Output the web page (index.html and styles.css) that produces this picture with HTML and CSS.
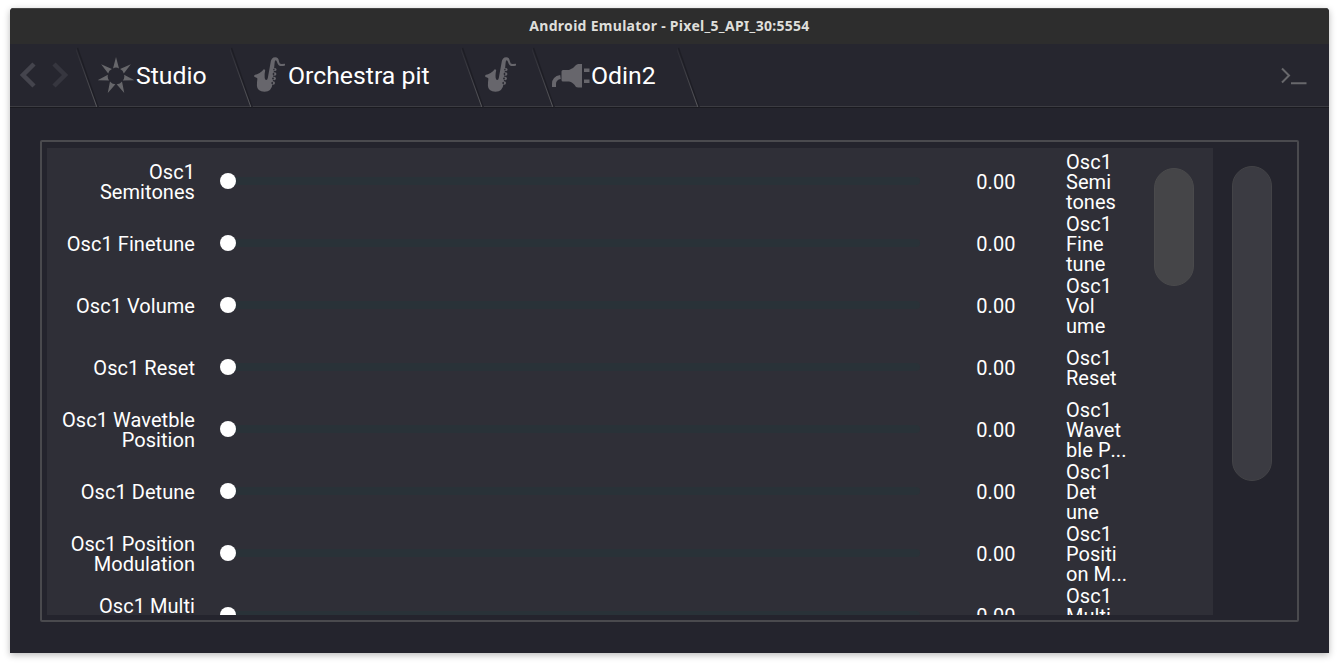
FILE: index.html
```
<!DOCTYPE html>
<html lang="en">
<head>
<meta charset="utf-8">
<title>Android Emulator - Pixel_5_API_30:5554</title>
<link rel="stylesheet" href="styles.css">
</head>
<body>
<svg width="0" height="0" class="defs">
  <symbol id="slash" viewBox="0 0 23 64">
    <path d="M1.500 4L22.500 64" stroke="#1e1e25" stroke-width="1.300"/>
    <path d="M-.5 4L20.800 63" stroke="url(#fade)" stroke-width="1"/>
  </symbol>
  <linearGradient id="fade" x1="0" y1="0" x2="0" y2="1">
    <stop offset="0" stop-color="#2c2c34"/><stop offset="1" stop-color="#58585c"/>
  </linearGradient>
  <symbol id="sax" viewBox="0 0 32 36">
    <path fill="#67666c" d="M.3 18C4 17.500 7.500 15 10 12L11.200 13.200Q10.200 17.500 10.700 21Q11 23 12.200 23Q13.500 22.800 13.800 21L16.500 6Q17 .3 21.300.3Q24.500.3 25 4.500Q25.300 7 27.500 7L31 6.800V8.600Q27 9.700 25 8.400Q23.600 7.400 23 5Q22.600 3.300 21.500 3.300Q20.800 3.400 20.600 6L18.700 26Q17.800 34.800 10.500 34.800Q3 34.500 2.900 28.500Q2.900 25 3.400 21.500Q2.500 20 .3 20Z"/>
    <g fill="#67666c"><circle cx="21" cy="12.500" r="1.500"/><circle cx="20.700" cy="17" r="1.700"/><circle cx="20.200" cy="21.500" r="1.700"/><circle cx="19.300" cy="26" r="1.700"/></g>
    <g fill="#26262f"><circle cx="19.900" cy="12.500" r=".7"/><circle cx="19.500" cy="17" r=".9"/><circle cx="19" cy="21.500" r=".9"/><circle cx="18.200" cy="26" r=".9"/></g>
  </symbol>
</svg>
<div class="window">
  <header class="titlebar">Android Emulator - Pixel_5_API_30:5554</header>
  <nav class="nav">
    <div class="arrows">
      <svg width="16" height="26" viewBox="0 0 16 26"><path d="M14 2L3 13L14 24" stroke="#44444d" stroke-width="4.500"/></svg>
      <svg width="16" height="26" viewBox="0 0 16 26"><path d="M2 2L13 13L2 24" stroke="#36363f" stroke-width="4.500"/></svg>
    </div>
    <svg class="slash"><use href="#slash"/></svg>
    <div class="tab studio">
      <svg width="36" height="38" viewBox="-18 -19 36 38"><g fill="#67676b"><path id="ray" d="M0-19L3-7.600Q0-9.200-3-7.600Z"/><use href="#ray" transform="rotate(51.400)"/><use href="#ray" transform="rotate(102.800)"/><use href="#ray" transform="rotate(154.200)"/><use href="#ray" transform="rotate(205.700)"/><use href="#ray" transform="rotate(257.100)"/><use href="#ray" transform="rotate(308.500)"/></g></svg>
      <span>Studio</span>
    </div>
    <svg class="slash"><use href="#slash"/></svg>
    <div class="tab orchestra">
      <svg width="32" height="36"><use href="#sax"/></svg>
      <span>Orchestra pit</span>
    </div>
    <svg class="slash"><use href="#slash"/></svg>
    <div class="tab instrument"><svg width="32" height="36"><use href="#sax"/></svg></div>
    <svg class="slash"><use href="#slash"/></svg>
    <div class="tab odin">
      <svg width="38" height="24" viewBox="0 0 38 24"><path d="M2 23V20Q2 14 8.500 13" fill="none" stroke="#67666c" stroke-width="4"/><path fill="#67666c" d="M11 6H17Q21 5 24 1L26 0H30V23.500H26L24 23Q21 18 17 17.500H11Q9.500 17.500 9.500 16V7.500Q9.500 6 11 6ZM32 4.500H37.500V8H32ZM32 15.500H37.500V19H32Z"/></svg>
      <span>Odin2</span>
    </div>
    <svg class="slash"><use href="#slash"/></svg>
    <svg class="console" width="26" height="18" viewBox="0 0 26 18"><path d="M1 1.500L8 8.500L1 15.500" stroke="#68686c" stroke-width="2"/><path d="M10 16.200H25.500" stroke="#68686c" stroke-width="2"/></svg>
  </nav>
  <main class="content">
    <section class="panel">
      <div class="list">
        <div class="rows">
          <div class="row"><div class="label">Osc1<br>Semitones</div><div class="slider"><i></i></div><div class="value">0.00</div><div class="name">Osc1<br>Semi<br>tones</div></div>
          <div class="row"><div class="label">Osc1 Finetune</div><div class="slider"><i></i></div><div class="value">0.00</div><div class="name">Osc1<br>Fine<br>tune</div></div>
          <div class="row"><div class="label">Osc1 Volume</div><div class="slider"><i></i></div><div class="value">0.00</div><div class="name">Osc1<br>Vol<br>ume</div></div>
          <div class="row"><div class="label">Osc1 Reset</div><div class="slider"><i></i></div><div class="value">0.00</div><div class="name">Osc1<br>Reset</div></div>
          <div class="row"><div class="label">Osc1 Wavetble<br>Position</div><div class="slider"><i></i></div><div class="value">0.00</div><div class="name">Osc1<br>Wavet<br>ble <span class="unkerned">P...</span></div></div>
          <div class="row"><div class="label">Osc1 Detune</div><div class="slider"><i></i></div><div class="value">0.00</div><div class="name">Osc1<br>Det<br>une</div></div>
          <div class="row"><div class="label">Osc1 Position<br>Modulation</div><div class="slider"><i></i></div><div class="value">0.00</div><div class="name">Osc1<br>Positi<br>on M...</div></div>
          <div class="row"><div class="label">Osc1 Multi</div><div class="slider"><i></i></div><div class="value">0.00</div><div class="name">Osc1<br>Multi<br>&nbsp;</div></div>
        </div>
        <div class="thumb inner"></div>
      </div>
      <div class="thumb outer"></div>
    </section>
  </main>
</div>
</body>
</html>
```
FILE: styles.css
```
* { box-sizing: border-box; }
body { margin: 0; padding: 8px 10px 11px; height: 664px; overflow: hidden; background: #fff; font-family: Roboto, sans-serif; color: #fff; }
svg { display: block; flex: none; fill: none; }
.defs { position: absolute; }
.window { height: 645px; display: flex; flex-direction: column; background: #24242d; border-radius: 4px 4px 0 0; overflow: hidden; box-shadow: 0 2px 7px rgba(0, 0, 0, .28); }
.titlebar { height: 36px; flex: none; background: #2d2d2d; border-top: 1px solid #454545; text-align: center; font: bold 14px/34px "Noto Sans", sans-serif; letter-spacing: .29px; color: #dfdfdb; }
.nav { height: 64px; flex: none; display: flex; background: linear-gradient(#26262f 0 62px, #3c3c42 62px 63px, #1a1a20 63px); }
.arrows { width: 66px; display: flex; gap: 16px; padding: 18px 0 0 10px; }
.slash { width: 23px; height: 64px; margin-right: -1px; }
.tab { display: flex; align-items: center; font-size: 24.8px; line-height: 30px; white-space: nowrap; }
.studio { width: 132px; gap: 2px; }
.orchestra { width: 209px; gap: 2px; padding-left: 2px; }
.instrument { width: 49px; padding-left: 2px; }
.odin { width: 123px; gap: 1px; margin-left: -2px; margin-right: 2px; }
.tab svg { margin-bottom: 1px; }
.orchestra svg, .instrument svg { margin-bottom: 3px; }
.console { margin: 23px 22px 0 auto; }
.content { flex: 1; padding: 32px 30px 31px; }
.panel { width: 1259px; height: 482px; display: flex; border: 2px solid #4a4a4e; border-radius: 2px; padding: 6px 5px; }
.list { width: 1166px; height: 467px; display: flex; background: #2f2f37; overflow: hidden; }
.rows { width: 1107px; padding-top: 3px; }
.row { height: 62px; display: flex; align-items: center; font-size: 20px; line-height: 20px; letter-spacing: .05px; white-space: nowrap; }
.row:last-child .label { height: 40px; }
.label { width: 148px; text-align: right; }
.slider { width: 693px; height: 8px; margin: -3px 0 0 32px; border-radius: 4px; background: #293238; display: flex; align-items: center; }
.slider i { width: 16px; height: 16px; margin-left: -7px; border-radius: 50%; background: #fff; flex: none; }
.value { width: 95.5px; text-align: right; }
.name { margin-left: 50.5px; }
.unkerned { font-kerning: none; }
.thumb { width: 40px; border-radius: 20px; border: 1px solid #4a4a4c; flex: none; }
.inner { height: 118px; margin-top: 20px; background: #454548; }
.outer { height: 315px; margin: 18px 0 0 19px; background: #3b3b42; border-color: #434347; }
```
